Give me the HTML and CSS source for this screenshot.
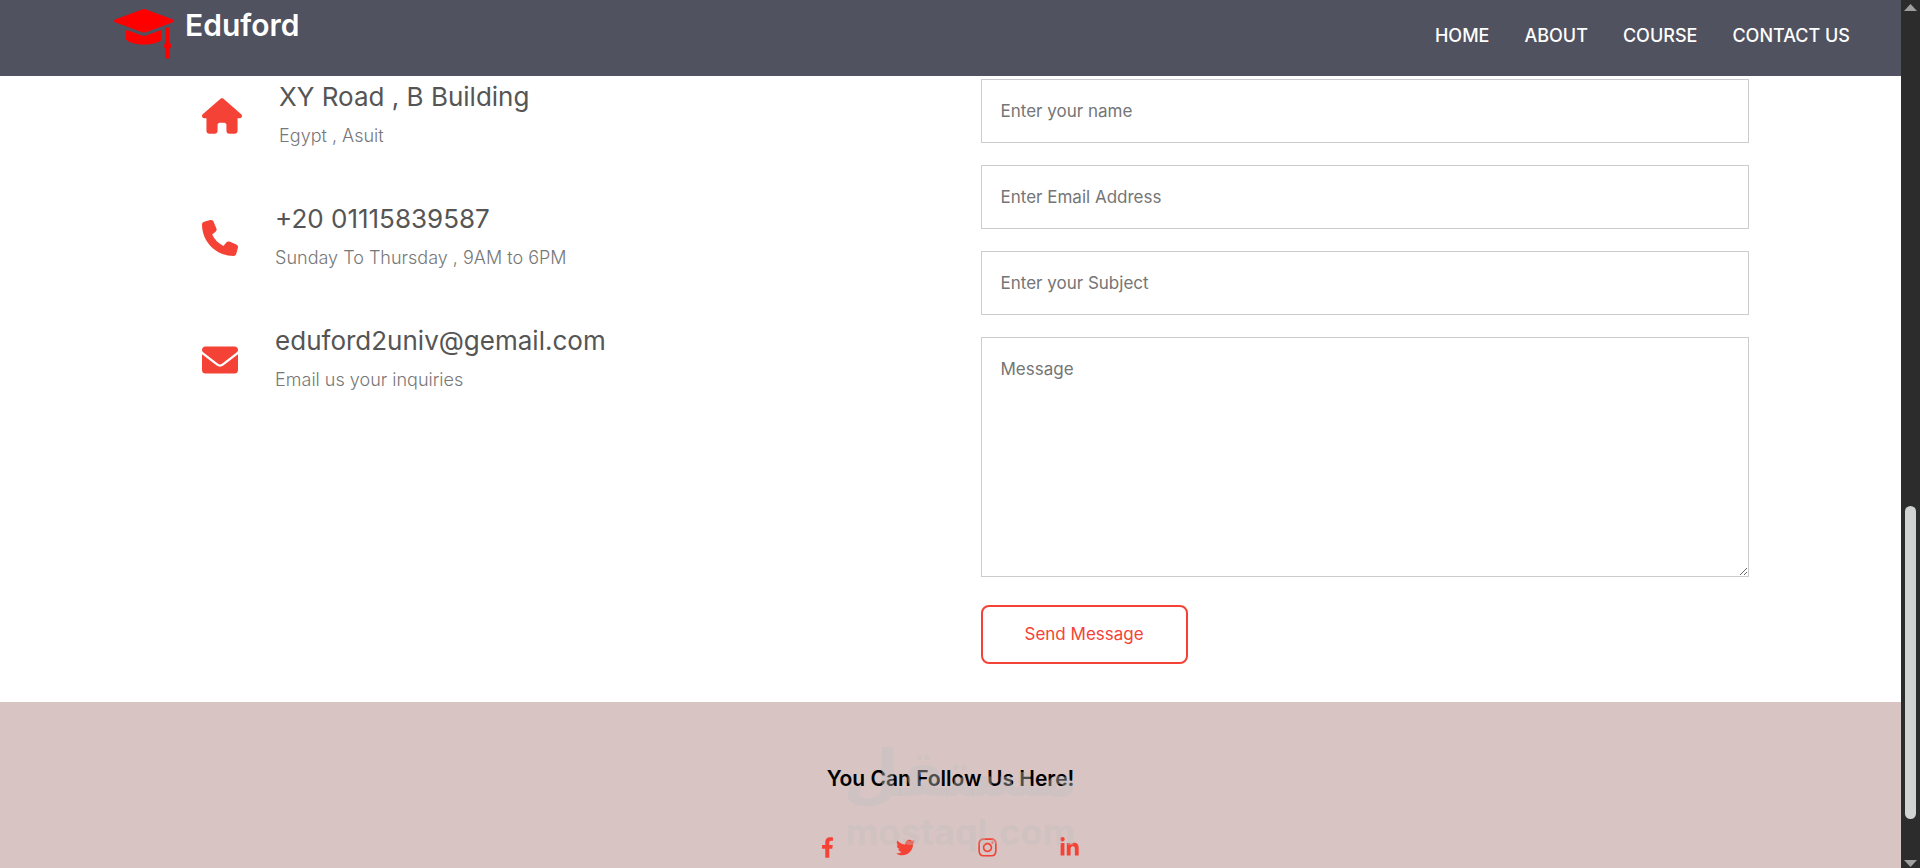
FILE: index.html
```
<!DOCTYPE html>
<html lang="en">
<head>
    <meta charset="UTF-8">
    <meta name="viewport" content="width=device-width, initial-scale=1.0">
    <title>Eduford - Contact Us</title>
    <link rel="stylesheet" href="styles.css">
</head>
<body>
    <div class="page">
        <header class="header">
            <a href="#" class="logo">
                <svg class="logo-cap" viewBox="0 0 60 50" aria-hidden="true">
                    <path d="M28 .5Q30-.3 32 .5L59 10.500Q61 12 59 13.200L32 23.200Q30 24 28 23.200L1 13.200Q-1 12 1 10.500Z"/>
                    <path d="M12 21.500Q13 20.800 15 21.800L28 26.500Q30 27.200 32 26.500L45 21.800Q47.500 20.800 47.500 22V31C44 34 38 35.500 30 35.500S15 34 12 30.500Z"/>
                    <path d="M51.500 19.500Q53.500 17.500 55.500 19V33.500Q57.500 35 57 37.500Q56.700 39 55.500 40V48.500Q53.500 51 51.500 48.500V40Q50 39 50 37Q50 34.800 51.500 33.500Z"/>
                </svg>
                <span class="logo-name">Eduford</span>
            </a>
            <nav class="nav-links">
                <a href="#">HOME</a>
                <a href="#">ABOUT</a>
                <a href="#">COURSE</a>
                <a href="#">CONTACT US</a>
            </nav>
        </header>

        <main class="contact-us">
            <div class="contact-info">
                <div class="contact-item">
                    <svg class="contact-icon home" viewBox="0 0 576 512" aria-hidden="true"><path d="M575.8 255.5c0 18-15 32.1-32 32.1h-32l.7 160.2c0 2.700-.2 5.400-.5 8.100V472c0 22.100-17.900 40-40 40H456c-1.100 0-2.200 0-3.300-.1c-1.400 .1-2.800 .1-4.200 .1H416 392c-22.100 0-40-17.900-40-40V448 384c0-17.700-14.300-32-32-32H256c-17.700 0-32 14.300-32 32v64 24c0 22.100-17.900 40-40 40H160 128.100c-1.500 0-3-.1-4.500-.2c-1.200 .1-2.400 .2-3.600 .2H104c-22.100 0-40-17.900-40-40V360c0-.9 0-1.900 .1-2.800V287.600H32c-18 0-32-14-32-32.100c0-9 3-17 10-24L266.400 8c7-7 15-8 22-8s15 2 21 7L564.800 231.500c8 7 12 15 11 24z"/></svg>
                    <div>
                        <h5>XY Road , B Building</h5>
                        <p>Egypt , Asuit</p>
                    </div>
                </div>
                <div class="contact-item">
                    <svg class="contact-icon" viewBox="0 0 512 512" aria-hidden="true"><path d="M164.9 24.600c-7.700-18.600-28-28.500-47.400-23.200l-88 24C12.100 30.200 0 46 0 64C0 311.400 200.600 512 448 512c18 0 33.800-12.100 38.600-29.500l24-88c5.300-19.400-4.600-39.700-23.200-47.400l-96-40c-16.300-6.800-35.200-2.100-46.300 11.600L304.700 368C234.300 334.700 177.300 277.700 144 207.300L193.300 167c13.700-11.200 18.400-30 11.600-46.300l-40-96z"/></svg>
                    <div>
                        <h5>+20 01115839587</h5>
                        <p>Sunday To Thursday , 9AM to 6PM</p>
                    </div>
                </div>
                <div class="contact-item">
                    <svg class="contact-icon" viewBox="0 0 512 512" aria-hidden="true"><path d="M256 352c-16.530 0-33.060-5.422-47.160-16.410L0 173.200V400C0 426.500 21.490 448 48 448h416c26.510 0 48-21.490 48-48V173.200l-208.800 162.500C289.100 346.600 272.500 352 256 352zM16.290 145.300l212.200 165.100c16.190 12.600 38.870 12.600 55.060 0l212.200-165.100C505.100 137.300 512 125 512 112C512 85.490 490.500 64 464 64h-416C21.490 64 0 85.490 0 112C0 125 6.010 137.300 16.290 145.300z"/></svg>
                    <div>
                        <h5>eduford2univ@gemail.com</h5>
                        <p>Email us your inquiries</p>
                    </div>
                </div>
            </div>

            <form class="contact-form">
                <input type="text" name="name" placeholder="Enter your name" aria-label="Enter your name">
                <input type="email" name="email" placeholder="Enter Email Address" aria-label="Enter Email Address">
                <input type="text" name="subject" placeholder="Enter your Subject" aria-label="Enter your Subject">
                <textarea name="message" rows="8" placeholder="Message" aria-label="Message"></textarea>
                <button type="submit">Send Message</button>
            </form>
        </main>

        <footer class="footer">
            <h4>You Can Follow Us Here!</h4>
            <div class="social">
                <a href="#" aria-label="Facebook"><svg class="facebook" viewBox="22 0 276 512"><path d="M279.140 288l14.220-92.660h-88.910v-60.130c0-25.350 12.420-50.060 52.240-50.060h40.420V6.260S260.430 0 225.360 0c-73.220 0-121.080 44.380-121.080 124.720v70.620H22.890V288h81.390v224h100.170V288z"/></svg></a>
                <a href="#" aria-label="Twitter"><svg class="twitter" viewBox="0 0 512 512"><path d="M459.370 151.716c.325 4.548.325 9.097.325 13.645 0 138.720-105.583 298.558-298.558 298.558-59.452 0-114.680-17.219-161.137-47.106 8.447.974 16.568 1.299 25.340 1.299 49.055 0 94.213-16.568 130.274-44.832-46.132-.975-84.792-31.188-98.112-72.772 6.498.974 12.995 1.624 19.818 1.624 9.421 0 18.843-1.300 27.614-3.573-48.081-9.747-84.143-51.980-84.143-102.985v-1.299c13.969 7.797 30.214 12.670 47.431 13.319-28.264-18.843-46.781-51.005-46.781-87.391 0-19.492 5.197-37.360 14.294-52.954 51.655 63.675 129.300 105.258 216.365 109.807-1.624-7.797-2.599-15.918-2.599-24.040 0-57.828 46.782-104.934 104.934-104.934 30.213 0 57.502 12.670 76.670 33.137 23.715-4.548 46.456-13.320 66.599-25.340-7.798 24.366-24.366 44.833-46.132 57.827 21.117-2.273 41.584-8.122 60.426-16.243-14.292 20.791-32.161 39.308-52.628 54.253z"/></svg></a>
                <a href="#" aria-label="Instagram"><svg class="instagram" viewBox="0 0 448 512"><path d="M224.100 141c-63.600 0-114.900 51.300-114.900 114.900s51.300 114.900 114.900 114.900S339 319.500 339 255.900 287.700 141 224.100 141zm0 189.600c-41.100 0-74.700-33.500-74.700-74.700s33.500-74.700 74.700-74.700 74.700 33.500 74.700 74.700-33.600 74.700-74.700 74.700zm146.400-194.300c0 14.900-12 26.800-26.800 26.800-14.900 0-26.800-12-26.800-26.800s12-26.800 26.800-26.800 26.800 12 26.800 26.800zm76.100 27.200c-1.700-35.900-9.900-67.700-36.200-93.900-26.200-26.200-58-34.400-93.900-36.200-37-2.100-147.900-2.100-184.900 0-35.800 1.700-67.600 9.900-93.900 36.100s-34.400 58-36.200 93.900c-2.100 37-2.100 147.900 0 184.900 1.700 35.900 9.900 67.700 36.200 93.900s58 34.400 93.900 36.200c37 2.100 147.900 2.100 184.900 0 35.900-1.700 67.700-9.900 93.900-36.200 26.200-26.200 34.400-58 36.200-93.900 2.100-37 2.100-147.800 0-184.800zM398.800 388c-7.800 19.600-22.900 34.700-42.600 42.600-29.500 11.700-99.500 9-132.100 9s-102.700 2.600-132.100-9c-19.600-7.800-34.700-22.900-42.600-42.600-11.700-29.500-9-99.500-9-132.100s-2.600-102.700 9-132.100c7.800-19.600 22.900-34.700 42.600-42.600 29.500-11.700 99.500-9 132.100-9s102.700-2.600 132.100 9c19.600 7.800 34.700 22.900 42.600 42.600 11.700 29.500 9 99.500 9 132.100s2.700 102.700-9 132.100z"/></svg></a>
                <a href="#" aria-label="LinkedIn"><svg class="linkedin" viewBox="0 0 448 512"><path d="M100.280 448H7.400V148.900h92.880zM53.790 108.100C24.090 108.100 0 83.500 0 53.800a53.790 53.790 0 0 1 107.580 0c0 29.700-24.100 54.300-53.790 54.300zM447.900 448h-92.680V302.400c0-34.700-.7-79.200-48.290-79.200-48.290 0-55.690 37.700-55.690 76.700V448h-92.780V148.900h89.080v40.800h1.300c12.400-23.500 42.690-48.300 87.880-48.300 94 0 111.280 61.900 111.280 142.300V448z"/></svg></a>
            </div>
            <div class="watermark" aria-hidden="true">
                <span class="watermark-ar" lang="ar">مستقل</span>
                <span class="watermark-en">mostaql.com</span>
            </div>
        </footer>
    </div>

    <div class="scrollbar" aria-hidden="true">
        <span class="arrow up"></span>
        <span class="thumb"></span>
        <span class="arrow down"></span>
    </div>
</body>
</html>
```
FILE: styles.css
```
* {
    margin: 0;
    padding: 0;
    box-sizing: border-box;
    font-family: Inter, "Noto Sans", sans-serif;
}

body {
    display: flex;
    height: 100vh;
    overflow: hidden;
    background: #fff;
}

.page {
    flex: 1;
    min-width: 0;
    display: flex;
    flex-direction: column;
    overflow: hidden;
}

a {
    color: inherit;
    text-decoration: none;
}

/* header */
.header {
    display: flex;
    justify-content: space-between;
    align-items: center;
    padding: 9px 51px 17px 6%;
    background: #505260;
    color: #fff;
}

.logo {
    display: flex;
    align-items: flex-start;
    gap: 11px;
}

.logo-cap {
    width: 60px;
    height: 50px;
    fill: #ff0000;
}

.logo-name {
    font-size: 30px;
    font-weight: 600;
    line-height: 32px;
}

.nav-links {
    display: flex;
    gap: 35px;
    padding-top: 2px;
    font-size: 18px;
    font-weight: 500;
}

/* contact section */
.contact-us {
    display: grid;
    grid-template-columns: 1fr 1fr;
    gap: 60px;
    padding: 3px 8% 38px;
}

.contact-info {
    display: flex;
    flex-direction: column;
    gap: 48px;
    padding-left: 50px;
}

.contact-item {
    display: flex;
    align-items: center;
    gap: 37px;
}

.contact-icon {
    width: 36px;
    height: 36px;
    fill: #f44336;
}

.contact-icon.home {
    width: 40px;
}

.contact-item h5 {
    margin-bottom: 4px;
    color: #555;
    font-size: 26px;
    font-weight: 400;
    line-height: 36px;
}

.contact-item p {
    color: #777;
    font-size: 18px;
    font-weight: 300;
    line-height: 34px;
}

.contact-form {
    display: flex;
    flex-direction: column;
    align-items: flex-start;
}

.contact-form input,
.contact-form textarea {
    display: block;
    width: 100%;
    margin-bottom: 22px;
    padding: 19px;
    border: 1px solid #ccc;
    outline: none;
    font-size: 17px;
    line-height: 24px;
}

.contact-form textarea {
    height: 240px;
    margin-bottom: 28px;
}

.contact-form ::placeholder {
    color: #757575;
}

.contact-form button {
    padding: 16px 42px;
    border: 2px solid #f44336;
    border-radius: 8px;
    background: transparent;
    color: #f44336;
    font-size: 17px;
    line-height: 23px;
    cursor: pointer;
}

/* footer */
.footer {
    position: relative;
    flex: 1;
    display: flex;
    flex-direction: column;
    align-items: center;
    padding-top: 62px;
    background: #d8c4c3;
}

.footer h4 {
    margin-bottom: 43px;
    color: #000;
    font-size: 21px;
    font-weight: 600;
    line-height: 30px;
}

.social {
    display: flex;
    align-items: center;
    gap: 63px;
}

.social a {
    display: block;
}

.social svg {
    display: block;
    width: 19px;
    height: 21px;
    fill: #f44336;
}

.social .facebook {
    width: 11px;
}

.watermark {
    position: absolute;
    top: 36px;
    left: 0;
    right: 0;
    display: flex;
    flex-direction: column;
    align-items: center;
    padding-left: 20px;
    color: rgba(192, 192, 192, 0.4);
    font-weight: 700;
    pointer-events: none;
}

.watermark-ar {
    font-family: "DejaVu Sans", sans-serif;
    font-size: 64px;
    line-height: 72px;
}

.watermark-en {
    font-size: 36px;
    line-height: 44px;
}

/* scrollbar */
.scrollbar {
    display: grid;
    grid-template-rows: 20px 1fr 20px;
    justify-items: center;
    width: 19px;
    background: #2c2c2c;
}

.arrow {
    align-self: start;
    width: 13px;
    height: 7px;
    margin-top: 4px;
    background: #9f9f9f;
    clip-path: polygon(50% 0, 100% 100%, 0 100%);
}

.arrow.down {
    align-self: end;
    margin-bottom: 1px;
    clip-path: polygon(0 0, 100% 0, 50% 100%);
}

.thumb {
    align-self: start;
    width: 11px;
    height: 36vh;
    margin-top: 56vh;
    border-radius: 6px;
    background: #d1d3d2;
}
```
